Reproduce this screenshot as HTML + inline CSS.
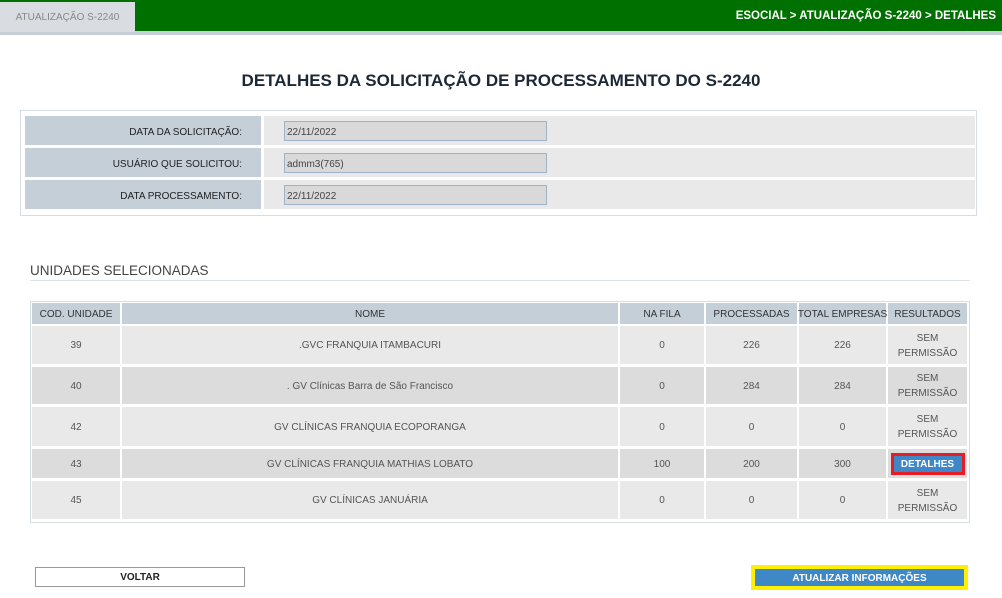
<html><head><style>
body{margin:0;width:1002px;height:598px;position:relative;background:#fff;font-family:"Liberation Sans","DejaVu Sans",sans-serif;overflow:hidden}
.a{position:absolute;box-sizing:border-box}
.c{display:flex;align-items:center;justify-content:center;text-align:center}
.t{font-size:10px;color:#555;padding-top:1px}
.h{background:#c5cfd8;color:#333;font-size:10px;white-space:nowrap;padding-top:1px}
.l{display:flex;align-items:center;justify-content:flex-end;padding:3px 19px 0 0;font-size:10px;color:#222;background:#c5cfd8}
.i{background:#d9d9d9;border:1px solid #9fb2c6;font-size:10px;color:#444;padding:5px 2px 0}
</style></head><body>
<div class="a" style="left:0;top:0;width:1002px;height:31px;background:#007000"></div>
<div class="a" style="left:0;top:31px;width:1002px;height:4px;background:#c5cfd8"></div>
<div class="a c" style="left:0;top:2px;width:135px;height:30px;background:#d9dde1;color:#888;font-size:10px">ATUALIZAÇÃO S-2240</div>
<div class="a" style="right:6px;top:10px;color:#fff;font-weight:bold;font-size:11.5px">ESOCIAL &gt; ATUALIZAÇÃO S-2240 &gt; DETALHES</div>
<div class="a c" style="left:0;top:69px;width:1002px;height:24px;font-size:17px;font-weight:bold;color:#1c2836">DETALHES DA SOLICITAÇÃO DE PROCESSAMENTO DO S-2240</div>
<div class="a" style="left:20px;top:110px;width:957px;height:106px;border:1px solid #d6dce3"></div>
<div class="a l" style="left:25px;top:116px;width:236px;height:29px">DATA DA SOLICITAÇÃO:</div>
<div class="a l" style="left:25px;top:148px;width:236px;height:29px">USUÁRIO QUE SOLICITOU:</div>
<div class="a l" style="left:25px;top:180px;width:236px;height:29px">DATA PROCESSAMENTO:</div>
<div class="a" style="left:264px;top:116px;width:711px;height:29px;background:#e9e9e9"></div>
<div class="a" style="left:264px;top:148px;width:711px;height:29px;background:#e9e9e9"></div>
<div class="a" style="left:264px;top:180px;width:711px;height:29px;background:#e9e9e9"></div>
<div class="a i" style="left:284px;top:121px;width:263px;height:20px">22/11/2022</div>
<div class="a i" style="left:284px;top:153px;width:263px;height:20px">admm3(765)</div>
<div class="a i" style="left:284px;top:185px;width:263px;height:20px">22/11/2022</div>
<div class="a" style="left:30px;top:263px;font-size:13.5px;color:#444">UNIDADES SELECIONADAS</div>
<div class="a" style="left:30px;top:280px;width:940px;height:1px;background:#dde2e7"></div>
<div class="a" style="left:30px;top:301px;width:940px;height:222px;border:1px solid #d6dce3"></div>
<div id="tb"></div>
<div class="a c" style="left:35px;top:567px;width:210px;height:20px;border:1px solid #999;font-size:10px;font-weight:bold;color:#222;padding-top:1px">VOLTAR</div>
<div class="a c" style="left:751px;top:565px;width:217px;height:25px;background:#ffef00;padding:4px"><div class="c" style="width:100%;height:100%;background:#3f88c8;color:#fff;font-size:10px;font-weight:bold;padding-top:1px;box-sizing:border-box">ATUALIZAR INFORMAÇÕES</div></div>
<script>
var cols=[[32,120],[122,618],[620,704],[706,797],[799,886],[888,967]];
var hd=["COD. UNIDADE","NOME","NA FILA","PROCESSADAS","TOTAL EMPRESAS","RESULTADOS"];
var rows=[[326,364,"39",".GVC FRANQUIA ITAMBACURI","0","226","226",0],[367,404,"40",". GV Clínicas Barra de São Francisco","0","284","284",1],[407,446,"42","GV CLÍNICAS FRANQUIA ECOPORANGA","0","0","0",0],[449,478,"43","GV CLÍNICAS FRANQUIA MATHIAS LOBATO","100","200","300",1],[481,519,"45","GV CLÍNICAS JANUÁRIA","0","0","0",0]];
var h="";
cols.forEach(function(c,i){h+='<div class="a c h" style="left:'+c[0]+'px;top:303px;width:'+(c[1]-c[0])+'px;height:21px">'+hd[i]+'</div>';});
rows.forEach(function(r){var bg=r[7]?"#dcdcdc":"#e9e9e9";cols.forEach(function(c,i){var txt=i<5?r[i+2]:(r[2]=="43"?'<div class="c" style="width:74px;height:22px;background:#e81c24;padding:3px;box-sizing:border-box"><div class="c" style="width:100%;height:100%;background:#3f88c8;color:#fff;font-weight:bold">DETALHES</div></div>':'SEM<br>PERMISSÃO');
h+='<div class="a c t" style="left:'+c[0]+'px;top:'+r[0]+'px;width:'+(c[1]-c[0])+'px;height:'+(r[1]-r[0])+'px;background:'+bg+';line-height:15px">'+txt+'</div>';});});
document.getElementById("tb").outerHTML=h;
</script>
</body></html>
